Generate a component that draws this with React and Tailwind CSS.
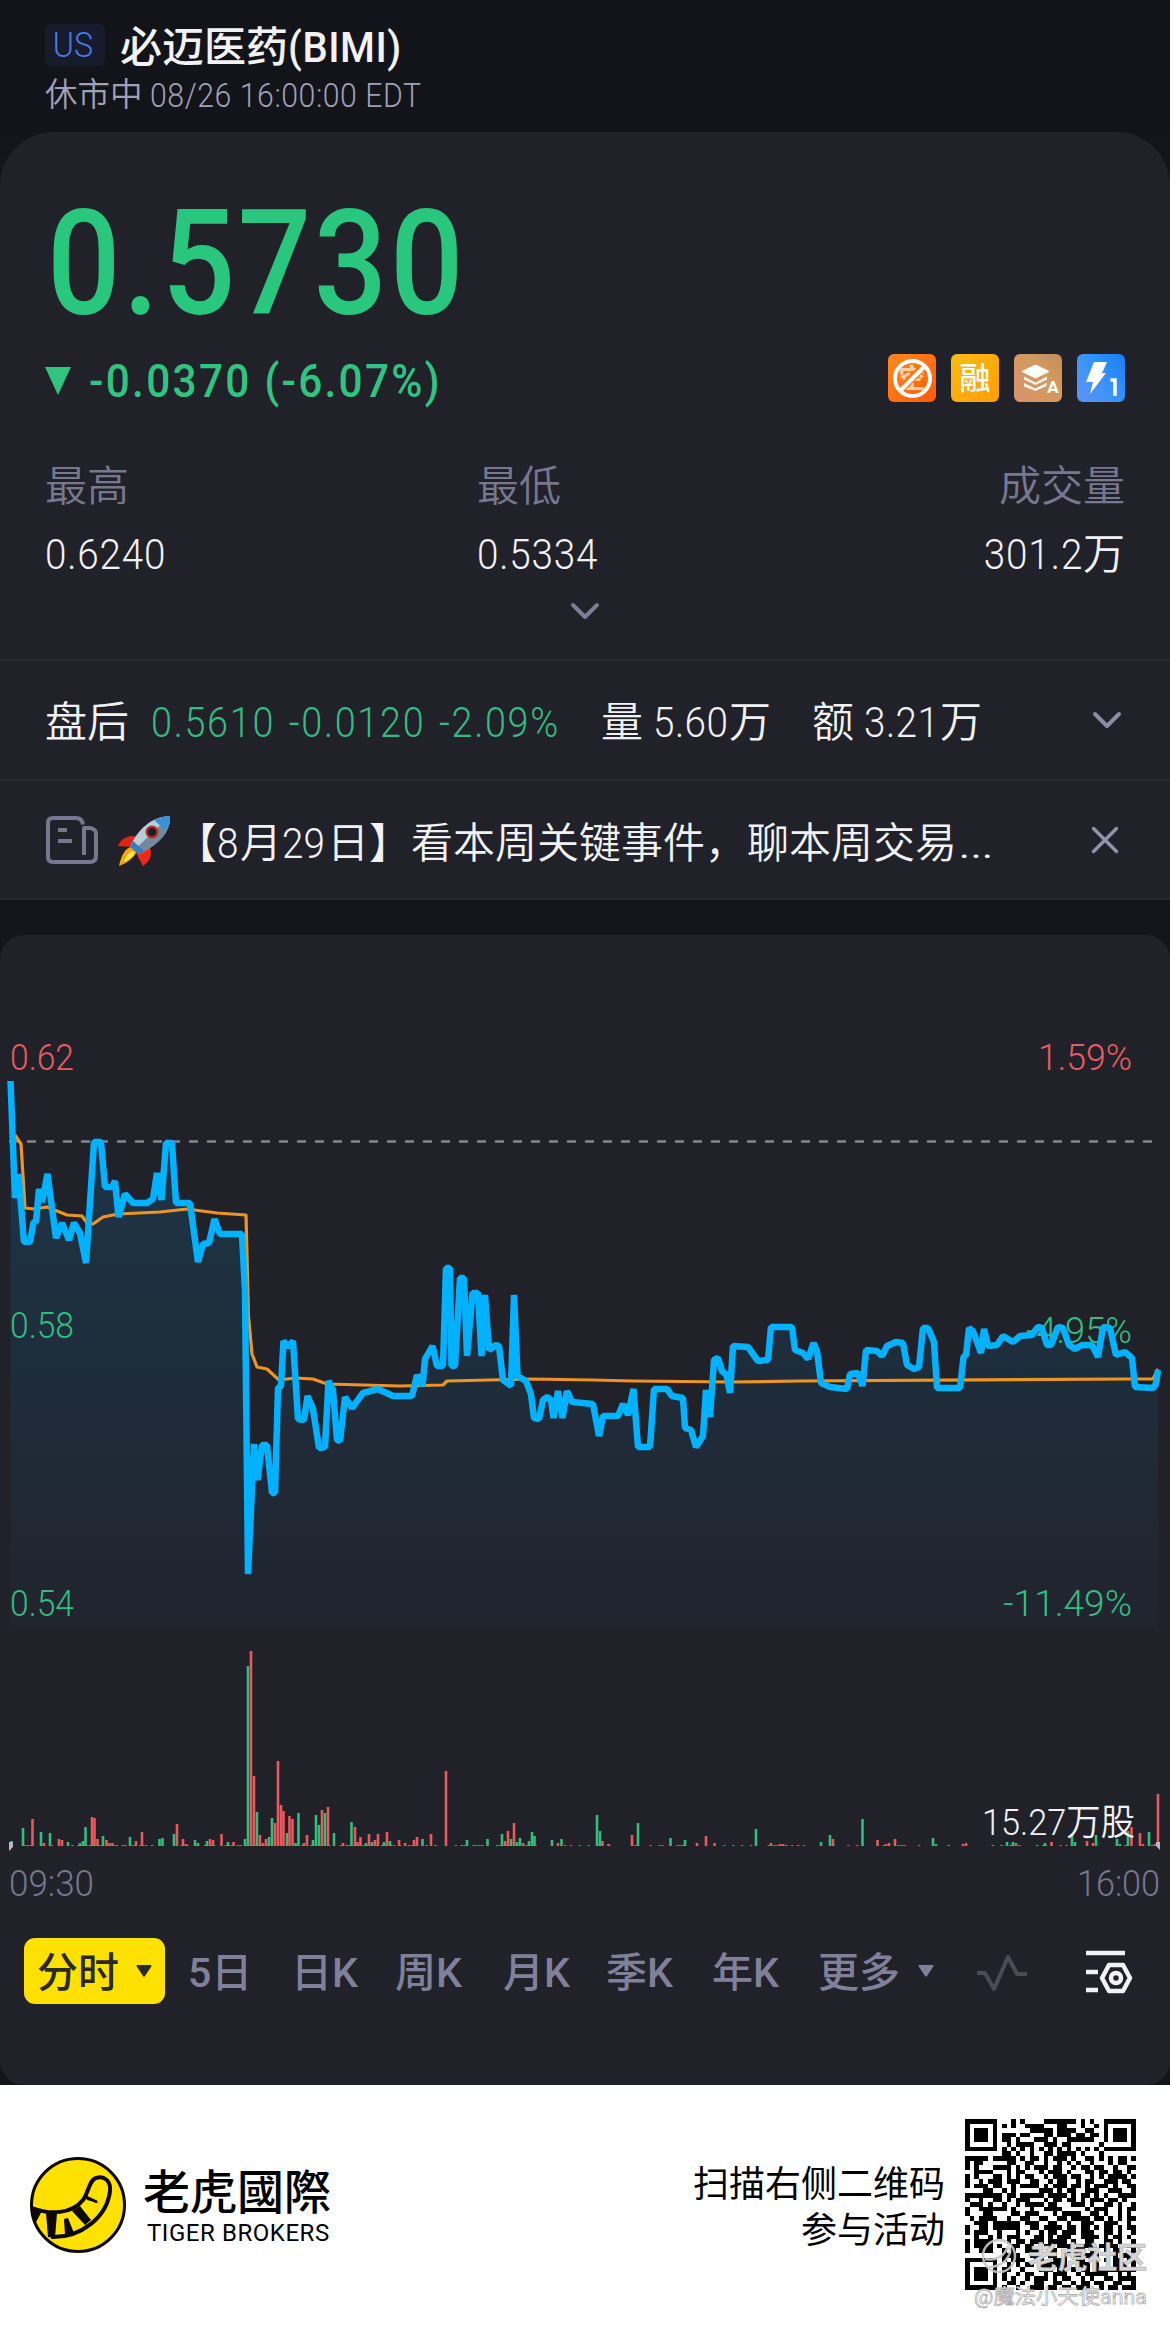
import React from 'react';
import { ChevronDown, X } from 'lucide-react';

const priceLine =
  '10.5,1081 15,1198 18.5,1174 24,1242 30,1242 33.5,1222 36,1222 39,1189 42,1202 47.5,1174 56,1238 62,1223 69,1240 74,1223 80,1233 86,1263 94,1142 101,1142 105,1187 112,1187 115,1181 118.5,1217 125,1194 133,1203 147,1203 153,1199 157,1173 161.5,1200 166,1143 172,1143 176,1203 190,1203 198,1262 203,1244 209,1243 214.5,1219 220,1234 242,1234 245,1291 248,1574 254,1444 257.5,1480 262,1445 267,1445 272,1493 275,1493 278,1388 281,1386 283.5,1341 288,1347 293,1341 298,1419 304,1420 307.5,1396 313,1409 319,1448 325,1447 328.5,1381 333,1390 337,1440 340,1441 345,1397 352,1408 363,1393 378,1389 393,1396 ' +
  '412,1396 417,1375 422.5,1386 425,1359 432.5,1346 437,1366 443,1366 446,1268 450,1268 451.5,1366 455,1366 460,1278 464,1278 467,1356 472.5,1293 478,1293 481.5,1356 485,1295 489,1350 496,1345 499,1346 503,1380 511,1386 514,1295 517.5,1376 526,1381 531,1394 534,1418 539,1419 543,1400 547.5,1397 551,1400 553.5,1418 558,1391 562.5,1418 567,1391 572,1402 593,1404 599,1436 603,1416 618,1416 623,1404 628,1415 633.5,1389 638,1447 650,1447 654,1389 667,1389 672,1396 683,1398 685,1428 691,1430 696,1447 703,1436 706,1390 710,1417 714,1360 718,1358 722,1371 726.5,1375 730,1393 733,1346 748,1347 758,1361 768,1360 771,1327 ' +
  '792,1327 795,1350 803,1353 808,1359 813.5,1343 817,1351 821,1383 830,1387 847,1389 850,1374 858,1373 862.5,1386 866,1350 877,1351 882,1356 887,1346 896,1342 903,1343 907,1365 914,1369 919,1367 923,1328 928,1328 934,1342 937,1388 960,1388 963.5,1357 966,1355 969,1328 973,1331 981,1353 984,1329 988,1346 997,1345 1003,1336 1013,1342 1020,1336 1032,1335 1038,1327 1042,1328 1047,1345 1051,1345 1058,1327 1063,1328 1069,1345 1075,1349 1082,1345 1092,1345 1098,1357 1103,1327 1110,1328 1116,1355 1125,1352 1132,1358 1135,1387 1153,1388 1156,1384 1158,1370';

const avgLine =
  '15,1135 21,1144 25,1208 34,1209 47,1207 67,1215 82,1216 87,1223 93,1224 103,1217 118,1214 160,1212 187,1209 217,1213 246,1215 248.5,1316 252,1354 257,1367 267,1369 279,1380 295,1378 313,1379 327,1384 400,1386 443,1385 447,1381 530,1379 593,1380 633,1381 733,1382 800,1381 1130,1379 1153,1379 1158,1369';

// [x, height]
const upBars = [
  [11.5, 5], [23, 18], [41, 14], [50, 13], [68, 4], [80, 3], [83, 5], [85.5, 19], [103, 10], [130, 9], [159.5, 7], [162.5, 8],
  [174, 12], [195, 6], [198, 3], [207, 5], [228, 4], [245, 7], [248, 180], [257, 34], [269, 9], [272, 28], [287, 13], [295.5, 3],
  [298.5, 33], [313, 6], [316, 31], [319, 21], [325, 33], [334, 13], [351.5, 24], [366, 3], [372, 4], [384, 4], [390, 5],
  [422.5, 7], [467, 6], [487.5, 7], [502, 12], [511, 7], [517, 4], [520, 8], [529, 5], [532, 14], [534.5, 10], [552, 6],
  [561.5, 7], [597, 31], [600, 15], [638, 23], [670.5, 8], [685, 6], [756, 17], [821, 4], [830, 11], [862.5, 27], [933, 8],
  [936, 2], [1007, 4], [1013, 4], [1045, 3], [1072, 12], [1075, 4], [1096, 11], [1117, 7], [1120, 2], [1128, 15], [1149, 14],
];
const downBars = [
  [32.5, 27], [44, 3], [59, 7], [62, 6], [92, 29], [94.5, 28], [97.5, 7], [106.5, 6], [109.5, 3], [112.5, 3], [136, 5],
  [142, 14], [177, 22], [183, 7], [186, 2], [210, 7], [213, 6], [221.5, 12], [233.5, 4], [251, 195], [254, 70], [260, 11],
  [263, 3], [266, 7], [275, 23], [278, 85], [281, 41], [283.5, 35], [289.5, 30], [292.5, 27], [304, 3], [307, 11], [322, 36],
  [328, 39], [343, 3], [355, 19], [357.5, 4], [360.5, 9], [369, 12], [375, 6], [378, 12], [387, 14], [399, 6], [405, 3],
  [414, 6], [417, 9], [431, 12], [446, 75], [505, 5], [508, 15], [514, 23], [523, 3], [558, 3], [602.5, 5], [608.5, 2],
  [632, 11], [697, 3], [706, 10], [714.5, 3], [771, 3], [780, 2], [783, 2], [833, 7], [877.5, 6], [886, 2], [889, 3],
  [895, 7], [963, 2], [966, 3], [1016, 3], [1051.5, 4], [1087, 5], [1093, 3], [1131.5, 19], [1140, 13], [1143, 2],
  [1155, 2], [1158, 52],
];

const qrRows = [
  '#######...#.#....#######.#.#..#######',
  '#.....#.#.#..####...##...#..#.#.....#',
  '#.###.#.......#####.####..##..#.###.#',
  '#.###.#.###.##...##.###.##.##.#.###.#',
  '#.###.#.##.#...###.#..######..#.###.#',
  '#.....#..#.####..###.##......#......#',
  '#######.#.#.#.#.#.#.#.#.#.#.#.#######',
  '........##.#..#..##.####.#...#.......',
  '#####.#####.#.##.#.###.#..##.#.#.##.#',
  '#.##.....##..##..#..#.#.#..#...#.##..',
  '#.#...####.#.#.###.##..#.##.##..#..##',
  '..####...#.##...#.###.#...##.##.##.#.',
  '#.#...##.#.#.##..#.###.##..#.#.####.#',
  '#..#.###.###..##..#.##..#.##..###.##.',
  '#.###.##..#.####.#.###.##.#.###.#..##',
  '....##..#.#.....###.#.##..###..###..#',
  '########.##.#####.####.#.##.#.#..####',
  '#..#..##.#.###...#.##.##.#.###.##.#..',
  '.###.#..#..#.####.##...###.#..##.#..#',
  '#..######.#...#..####.....#.###..#.##',
  '#...##....##.###...#.####..##.#..#.#.',
  '.#.####..#..##..##..##.####.##.#.#.##',
  '..###.######.###..##..#..###..###..#.',
  '#..##.######..##.####.##.##.#.##.#.##',
  '#.###..#...#.#..#.##.###.###..##.#..#',
  '..#..#.#.###...##.#.###..####.#.##.#.',
  '#.####...#.##.###.####.#..##..##.#..#',
  '#.####.#..##.##..##.###.####.####..##',
  '#..###..#.#..###..##..####.#..#.##..#',
  '........####..###.##.#.##.###...#.##.',
  '#######.#.###..##..###..##..#.#.##.##',
  '#.....#..#.#.##.######..###.#...###.#',
  '#.###.#.##..#...###.##.#.##.#########',
  '#.###.#.#..#.##..#.###..#.#####..#.#.',
  '#.###.#.#.#..#.###.#.##..#.#..##.####',
  '#.....#..##.#..##..##..#.##.##..##..#',
  '#######.#..#..###.##.##.###..#.##.###',
];

const tabs = [
  ['5日', 'w-[103px]'],
  ['日K', 'w-[104px]'],
  ['周K', 'w-[108px]'],
  ['月K', 'w-[103px]'],
  ['季K', 'w-[106px]'],
  ['年K', 'w-[106px]'],
];

function Stat({ label, className, children }) {
  return (
    <div className={`flex flex-col ${className}`}>
      <span className="h-[68px] text-[42px] leading-[60px] text-[#77778f]">{label}</span>
      {children}
    </div>
  );
}

function BadgeIcons() {
  return (
    <div className="mb-[6px] flex gap-[15px]">
      <svg width="48" height="48" viewBox="0 0 48 48">
        <defs>
          <linearGradient id="b1" x1="0" y1="0" x2="1" y2="1"><stop stopColor="#ff8a1c" /><stop offset="1" stopColor="#ff5a0c" /></linearGradient>
        </defs>
        <rect width="48" height="48" rx="6" fill="url(#b1)" />
        <text x="24" y="34" textAnchor="middle" fontSize="27" fontWeight="700" fill="#ffd0a4">空</text>
        <path d="M11.500 36.500 36.500 11.500" stroke="#ff7414" strokeWidth="8" />
        <circle cx="24.500" cy="24.500" r="17.500" fill="none" stroke="#fff" strokeWidth="4" />
        <path d="M12 37 37 12" stroke="#fff" strokeWidth="4" />
      </svg>
      <div className="flex h-12 w-12 items-center justify-center rounded-md bg-linear-to-br from-[#f8bd10] to-[#ff9c08] text-[31px] leading-none font-medium text-white">融</div>
      <svg width="48" height="48" viewBox="0 0 48 48">
        <defs>
          <linearGradient id="b3" x1="0" y1="1" x2="1" y2="0"><stop stopColor="#d9926c" /><stop offset=".6" stopColor="#d49a5e" /><stop offset="1" stopColor="#c28d5b" /></linearGradient>
        </defs>
        <rect width="48" height="48" rx="6" fill="url(#b3)" />
        <path d="M21.500 11 35 17.500 21.500 24 8 17.500Z" fill="#fff" stroke="#fff" strokeLinejoin="round" />
        <path d="M10 22.500 21.500 28.500 33 22.500v3L21.500 31 10 25.500ZM10 29 21.500 34.500 33 28.500l-.5 3.500-11 5L10 32.500Z" fill="#fff" opacity=".9" />
        <text x="39" y="39" textAnchor="middle" fontSize="17" fontWeight="700" fill="#fff">A</text>
      </svg>
      <svg width="48" height="48" viewBox="0 0 48 48">
        <defs>
          <linearGradient id="b4" x1="0" y1=".8" x2="1" y2=".1"><stop stopColor="#5b93f5" /><stop offset=".5" stopColor="#3793fb" /><stop offset="1" stopColor="#1c7ef5" /></linearGradient>
        </defs>
        <rect width="48" height="48" rx="6" fill="url(#b4)" />
        <path d="M17 8h13l-5 11h4L13 40l3-12H9Z" fill="#fff" />
        <path d="M33.500 26H38v16" fill="none" stroke="#fff" strokeWidth="3.500" />
      </svg>
    </div>
  );
}

function Rocket() {
  return (
    <svg width="56" height="54" viewBox="0 0 56 54">
      <path d="M22 22C12 19 5 24 2 31l14 1Z" fill="#df2417" />
      <path d="M34 33c3 7-1 14-7 18l-7-13Z" fill="#ef2818" />
      <path d="M15 32C9 33 5 41 3 51c8-3 15-8 18-15Z" fill="#f5a50b" />
      <path d="M16 36c-4 2-7 7-8 11 5-2 9-6 11-9Z" fill="#ffe845" />
      <path d="M14 32C21 15 36 1 54 1c1 16-12 29-31 38Z" fill="#bccbd9" />
      <path d="M18 35C29 25 41 13 54 1c1 16-12 29-31 38Z" fill="#71899f" />
      <path d="M38 5c6-3 11-4 16-4 0 6-1 10-4 15Z" fill="#3b91d5" />
      <path d="m14 32 3-6 11 10-5 3Z" fill="#357ec0" />
      <circle cx="36" cy="17" r="6.500" fill="#b32b20" />
      <circle cx="36" cy="17" r="4" fill="#221c26" />
    </svg>
  );
}

function ChartText({ x, y, w, fill, size = 36, end, children }) {
  return (
    <text x={x} y={y} fontSize={size} fontWeight="350" fill={fill} textLength={w} lengthAdjust="spacingAndGlyphs" textAnchor={end ? 'end' : 'start'}>
      {children}
    </text>
  );
}

function Chart() {
  // thin ticks for the minutes with almost no trades
  const ticks = [];
  for (let i = 0; i < 388; i++) {
    const r = (i * 7919 + ((i * i) % 13) * 31) % 17;
    if (r < (i < 200 ? 8 : 4)) ticks.push([10.5 + i * 2.95, i % 3 === 0 ? '#34b87c' : '#d9535c']);
  }
  return (
    <svg width="1170" height="970" viewBox="0 935 1170 970" className="block">
      <defs>
        <linearGradient id="area" gradientUnits="userSpaceOnUse" x1="0" y1="1081" x2="0" y2="1640">
          <stop stopColor="#00b0ff" stopOpacity=".15" />
          <stop offset="1" stopColor="#00b0ff" stopOpacity=".02" />
        </linearGradient>
      </defs>
      <path d="M9 1141.500H1154" stroke="#858592" strokeWidth="2.500" strokeDasharray="9 9" />
      <polygon points={`10.5,1628 ${priceLine} 1158,1628`} fill="url(#area)" />
      <ChartText x="10" y="1070" w="64" fill="#e85c63">0.62</ChartText>
      <ChartText x="10" y="1338" w="64" fill="#32bd80">0.58</ChartText>
      <ChartText x="10" y="1616" w="64" fill="#32bd80">0.54</ChartText>
      <ChartText x="1132" y="1070" w="94" fill="#e85c63" end>1.59%</ChartText>
      <ChartText x="1132" y="1343" w="106" fill="#32bd80" end>-4.95%</ChartText>
      <ChartText x="1132" y="1616" w="129" fill="#32bd80" end>-11.49%</ChartText>
      <polyline points={avgLine} fill="none" stroke="#ee9425" strokeWidth="3.200" strokeLinejoin="round" />
      <polyline points={priceLine} fill="none" stroke="#00b2ff" strokeWidth="6.500" strokeLinejoin="bevel" />

      {ticks.map(([x, c]) => <rect key={x} x={x - 1.2} y="1845" width="2.4" height="1" fill={c} />)}
      {upBars.map(([x, h]) => <rect key={x} x={x - 1.3} y={1846 - h} width="2.6" height={h} fill="#2fbe7b" />)}
      {downBars.map(([x, h]) => <rect key={x} x={x - 1.3} y={1846 - h} width="2.6" height={h} fill="#e8585d" />)}
      <path d="M9 1842v9l4-4v-5ZM1160 1842v8l-4-4v-4Z" fill="#b9b9c6" />

      <ChartText x="1135" y="1835" w="153" fill="#f2f2f4" end>15.27万股</ChartText>
      <ChartText x="9" y="1896" w="85" fill="#77778f">09:30</ChartText>
      <ChartText x="1160" y="1896" w="83" fill="#77778f" end>16:00</ChartText>
    </svg>
  );
}

function Triangle({ className }) {
  return (
    <svg width="16" height="12" viewBox="0 0 16 12" className={className}>
      <path d="M1.500 0h13q1.500 0 .8 1.500L9 11q-1 1.500-2 0L.7 1.500Q0 0 1.500 0Z" fill="currentColor" />
    </svg>
  );
}

function TigerLogo() {
  return (
    <svg width="96" height="96" viewBox="0 0 96 96">
      <circle cx="48" cy="48" r="46.500" fill="#ffe100" stroke="#0c0700" strokeWidth="3" />
      <path d="M2 51C20 58 42 57 53 43c6-8 6-20 13-22 8-3 15 3 14 13-3 26-29 47-59 46" fill="none" stroke="#0c0700" strokeWidth="4" />
      <path d="M2 51 12 54 5 67ZM16 56h11l-2 25-7-1ZM34 62l4-1 6 15-9 2ZM42 54l8-5 11 14-6 5ZM55 38l14 8-12-3Z" fill="#0c0700" />
      <path d="m56 40 11 5" stroke="#0c0700" strokeWidth="3" />
    </svg>
  );
}

function QrCode() {
  return (
    <svg width="171" height="171" viewBox="0 0 37 37" shapeRendering="crispEdges">
      {qrRows.map((row, y) =>
        [...row].map((c, x) => (c === '#' ? <rect key={`${x}-${y}`} x={x} y={y} width="1" height="1" /> : null))
      )}
    </svg>
  );
}

function App() {
  return (
    <div className="flex h-[2325px] w-[1170px] flex-col overflow-hidden bg-[#14141b] font-['Roboto','Noto_Sans_CJK_SC',sans-serif] whitespace-nowrap">
      {/* En-tête */}
      <header className="h-[132px] shrink-0 bg-[#131419] pt-6 pl-[45px]">
        <div className="flex h-[42px] items-center">
          <span className="flex h-[42px] w-[60px] items-center justify-center rounded-md bg-[#161c2b] pt-[3px] text-[35px] font-[350] text-[#4978e8]">
            <span className="-translate-x-[2px] scale-x-[.92]">US</span>
          </span>
          <h1 className="ml-[15px] flex pt-[6px] text-[42px] leading-[42px] font-medium text-[#f2f2f4]">
            必迈医药<span className="origin-left scale-x-[.95] tracking-[.6px]">(BIMI)</span>
          </h1>
        </div>
        <p className="mt-[7px] flex text-[32.500px] leading-[44px] font-[350] text-[#a0a0b8]">
          休市中<span className="ml-[7px] origin-left scale-x-[.89] text-[34px] tracking-[.6px]">08/26 16:00:00 EDT</span>
        </p>
      </header>

      {/* Cours */}
      <section className="flex h-[768px] shrink-0 flex-col rounded-t-[54px] bg-[#212129]">
        <div className="h-[527px] shrink-0 px-[45px] pt-[57px]">
          <div className="ml-[2px] h-[147px] origin-left scale-x-[.88] text-[147px] leading-[150px] font-medium tracking-[.02em] text-[#29c77d]">0.5730</div>
          <div className="flex h-[90px] items-center justify-between">
            <div className="flex items-center text-[#2fc581]">
              <svg width="26" height="28" viewBox="0 0 26 28"><path d="M0 0h26L13 28Z" fill="currentColor" /></svg>
              <span className="ml-[18px] origin-left scale-x-[.9] text-[47px] font-medium tracking-[.055em]">-0.0370 (-6.07%)</span>
            </div>
            <BadgeIcons />
          </div>
          <div className="mt-[31px] flex text-[42px] leading-[60px] font-[350] text-[#f2f2f4]">
            <Stat label="最高" className="w-[432px]">
              <span className="origin-left scale-x-[.92] tracking-[.9px]">0.6240</span>
            </Stat>
            <Stat label="最低" className="w-[300px]">
              <span className="origin-left scale-x-[.92] tracking-[.9px]">0.5334</span>
            </Stat>
            <Stat label="成交量" className="ml-auto items-end">
              <span className="flex"><span className="origin-right scale-x-[.92] tracking-[1px]">301.2</span>万</span>
            </Stat>
          </div>
          <ChevronDown size={48} strokeWidth={2} className="mx-auto mt-[2px] text-[#7c7c96]" />
        </div>

        <div className="flex h-[120px] shrink-0 items-center border-t-2 border-[#292932] px-[45px] text-[42px] font-[350] text-[#f2f2f4]">
          <span className="w-[106px] pt-[5px]">盘后</span>
          <span className="w-[450px] origin-left scale-x-[.9] pt-[4px] text-[42px] tracking-[.045em] [word-spacing:3px] text-[#32bd80]">0.5610 -0.0120 -2.09%</span>
          <span className="flex w-[211px] pt-[5px]">量<span className="ml-[10px] w-[76px]"><span className="inline-block origin-left scale-x-[.92] tracking-[.5px]">5.60</span></span>万</span>
          <span className="flex pt-[5px]">额<span className="ml-[10px] w-[76px]"><span className="inline-block origin-left scale-x-[.92] tracking-[.5px]">3.21</span></span>万</span>
          <ChevronDown size={48} strokeWidth={2} className="-mr-[6px] ml-auto text-[#8c8ca5]" />
        </div>

        <div className="flex h-[121px] shrink-0 items-center border-y-2 border-[#292932] px-[45px] text-[42px] font-[350] text-[#f2f2f4]">
          <svg width="54" height="50" viewBox="0 0 54 50" fill="none" stroke="#77778f" strokeWidth="4">
            <path d="M38 9.500Q37 3 31 3H8Q3 3 3 8v34q0 5 5 5h37q6 0 6-6V19q0-5-6-6h-6v27" strokeLinejoin="round" />
            <path d="M13 15h9M13 26h14" />
          </svg>
          <span className="ml-[17px] pt-[4px]"><Rocket /></span>
          <span className="ml-[3px] flex pt-[7px]">
            【<span className="w-[23px] origin-left scale-x-[.92]">8</span>月<span className="w-[45px] origin-left scale-x-[.92]">29</span>日】看本周关键事件，聊本周交易
            <span className="origin-left scale-x-[1.400]">…</span>
          </span>
          <X size={46} strokeWidth={1.8} className="-mr-[3px] ml-auto text-[#9292aa]" />
        </div>
      </section>

      {/* Graphique */}
      <section className="mt-[35px] h-[1150px] shrink-0 rounded-[24px] bg-[#212129]">
        <Chart />
        <nav className="mt-[33px] flex h-[66px] items-center pl-6 text-[41px] font-medium text-[#80809a]">
          <button className="mr-[23px] flex h-[66px] w-[141px] items-center rounded-[11px] bg-[#ffe100] pl-[13px] text-[#29292b]">
            <span className="pt-[5px]">分时</span><Triangle className="ml-[17px]" />
          </button>
          {tabs.map(([label, width]) => (
            <span key={label} className={`pt-[5px] ${width}`}>{label}</span>
          ))}
          <span className="flex items-center"><span className="pt-[5px]">更多</span><Triangle className="ml-[18px]" /></span>
          <svg width="54" height="40" viewBox="0 0 54 40" fill="none" className="mt-[3px] ml-[41px]">
            <path d="M2 20h8l9 16L33 4l9 17h10" stroke="#4b4b58" strokeWidth="4" strokeLinejoin="round" />
          </svg>
          <svg width="48" height="44" viewBox="0 0 48 44" fill="none" stroke="#f2f2f4" strokeWidth="4.500" className="mt-[2px] ml-[56px]">
            <path d="M1 3h39M1 22h12M1 40h12" />
            <path d="M24 15h14l7 13-7 13H24l-7-13Z" strokeLinejoin="round" />
            <circle cx="31" cy="28" r="5" />
          </svg>
        </nav>
      </section>

      {/* Pied de page */}
      <footer className="relative flex h-[240px] shrink-0 items-center bg-white pl-[30px]">
        <TigerLogo />
        <div className="ml-[17px] w-[230px] text-black">
          <div className="text-[47px] leading-[52px] font-medium font-['Noto_Sans_CJK_TC',sans-serif]">老虎國際</div>
          <div className="mt-[3px] pl-[4px] text-[24px] leading-[30px] tracking-[.55px]">TIGER BROKERS</div>
        </div>
        <div className="ml-auto pt-[6px] text-right text-[36px] leading-[46px] text-black">
          扫描右侧二维码
          <br />
          参与活动
        </div>
        <div className="mr-[34px] mb-[2px] ml-[20px]"><QrCode /></div>

        {/* Filigrane */}
        <svg width="190" height="84" viewBox="0 0 190 84" className="absolute top-[145px] left-[970px]">
          <g fill="none" stroke="#c9c9c9" strokeWidth="2.500" opacity=".9">
            <circle cx="29" cy="26" r="16" />
            <path d="M15 29q16 3 23-12q6 4-4 15-7 5-15 5" />
          </g>
          <text x="58" y="38" fontSize="30" fontWeight="700" fill="#d6d6d6" stroke="#a8a8a8" strokeWidth=".6" textLength="119">老虎社区</text>
          <text x="4" y="74" fontSize="20" fill="#fff" stroke="#b4b4b4" strokeWidth=".8" textLength="173" lengthAdjust="spacingAndGlyphs">@魔法小天使anna</text>
        </svg>
      </footer>
    </div>
  );
}

export default App;
